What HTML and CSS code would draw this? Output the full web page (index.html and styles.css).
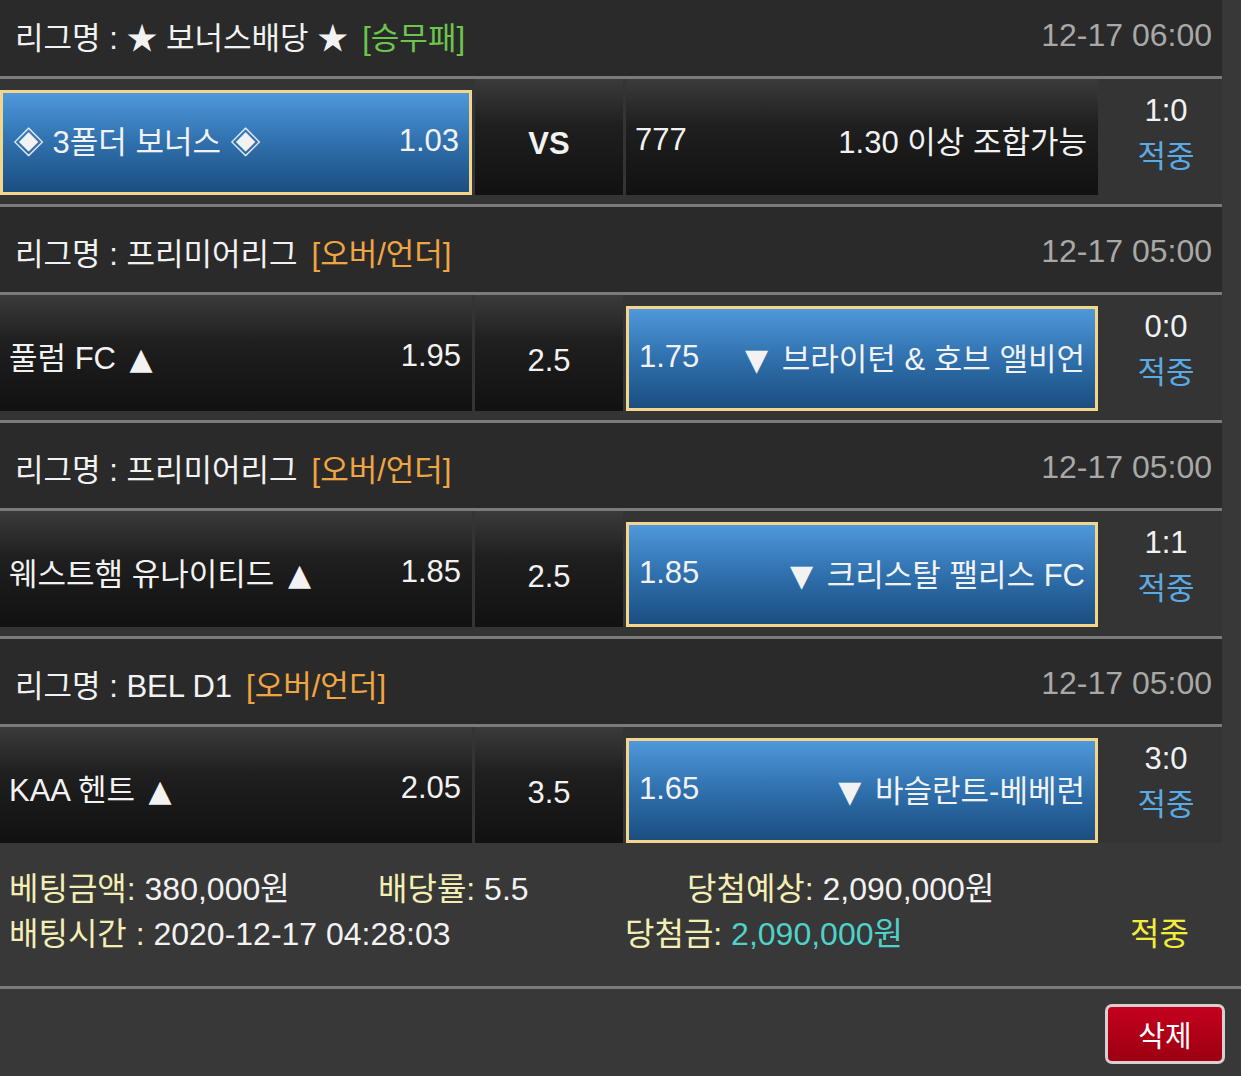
FILE: index.html
```html
<!DOCTYPE html>
<html lang="ko">
<head>
    <meta charset="UTF-8">
    <meta name="viewport" content="width=device-width, initial-scale=1.0">
    <title>베팅내역</title>
    <link rel="stylesheet" href="styles.css">
</head>
<body>
    <div class="slip">
        <!-- 경기 1 -->
        <div class="match">
            <div class="league">
                <span class="league-name">리그명 : ★ 보너스배당 ★</span>
                <span class="bet-type type-green">[승무패]</span>
                <span class="match-time">12-17 06:00</span>
            </div>
            <div class="bet-row">
                <div class="cell team selected">
                    <span>◈ 3폴더 보너스 ◈</span>
                    <span>1.03</span>
                </div>
                <div class="cell mid vs">VS</div>
                <div class="cell team">
                    <span>777</span>
                    <span>1.30 이상 조합가능</span>
                </div>
                <div class="result">
                    <div class="score">1:0</div>
                    <div class="status">적중</div>
                </div>
            </div>
        </div>

        <!-- 경기 2 -->
        <div class="match">
            <div class="league">
                <span class="league-name">리그명 : 프리미어리그</span>
                <span class="bet-type type-orange">[오버/언더]</span>
                <span class="match-time">12-17 05:00</span>
            </div>
            <div class="bet-row">
                <div class="cell team">
                    <span>풀럼 FC <span class="arrow up">▲</span></span>
                    <span>1.95</span>
                </div>
                <div class="cell mid">2.5</div>
                <div class="cell team selected">
                    <span>1.75</span>
                    <span><span class="arrow down">▼</span> 브라이턴 &amp; 호브 앨비언</span>
                </div>
                <div class="result">
                    <div class="score">0:0</div>
                    <div class="status">적중</div>
                </div>
            </div>
        </div>

        <!-- 경기 3 -->
        <div class="match">
            <div class="league">
                <span class="league-name">리그명 : 프리미어리그</span>
                <span class="bet-type type-orange">[오버/언더]</span>
                <span class="match-time">12-17 05:00</span>
            </div>
            <div class="bet-row">
                <div class="cell team">
                    <span>웨스트햄 유나이티드 <span class="arrow up">▲</span></span>
                    <span>1.85</span>
                </div>
                <div class="cell mid">2.5</div>
                <div class="cell team selected">
                    <span>1.85</span>
                    <span><span class="arrow down">▼</span> 크리스탈 팰리스 FC</span>
                </div>
                <div class="result">
                    <div class="score">1:1</div>
                    <div class="status">적중</div>
                </div>
            </div>
        </div>

        <!-- 경기 4 -->
        <div class="match">
            <div class="league">
                <span class="league-name">리그명 : BEL D1</span>
                <span class="bet-type type-orange">[오버/언더]</span>
                <span class="match-time">12-17 05:00</span>
            </div>
            <div class="bet-row">
                <div class="cell team">
                    <span>KAA 헨트 <span class="arrow up">▲</span></span>
                    <span>2.05</span>
                </div>
                <div class="cell mid">3.5</div>
                <div class="cell team selected">
                    <span>1.65</span>
                    <span><span class="arrow down">▼</span> 바슬란트-베베런</span>
                </div>
                <div class="result">
                    <div class="score">3:0</div>
                    <div class="status">적중</div>
                </div>
            </div>
        </div>
    </div>

    <div class="summary">
        <div class="summary-line">
            <span class="col-a"><span class="label">베팅금액:</span> 380,000원</span>
            <span class="col-b"><span class="label">배당률:</span> 5.5</span>
            <span><span class="label">당첨예상:</span> 2,090,000원</span>
        </div>
        <div class="summary-line">
            <span class="col-c"><span class="label">배팅시간 :</span> 2020-12-17 04:28:03</span>
            <span class="col-d"><span class="label">당첨금:</span> <span class="won">2,090,000원</span></span>
            <span class="win">적중</span>
        </div>
    </div>

    <div class="actions">
        <button class="delete-btn">삭제</button>
    </div>
</body>
</html>
```

FILE: styles.css
```css
:root {
    --bg-page: #383838;
    --bg-header: #2a2a2a;
    --bg-row: #343434;
    --line: #7b7b7b;
    --text-main: #f2f2f2;
    --text-dim: #a8a8a8;
    --label: #f3efb4;
    --blue-text: #5aaae8;
}

* {
    margin: 0;
    padding: 0;
    box-sizing: border-box;
}

body {
    font-family: "Liberation Sans", "Noto Sans CJK KR", sans-serif;
    font-size: 31px;
    background: var(--bg-page);
    color: var(--text-main);
    overflow: hidden;
}

/* 경기 목록 */
.slip {
    width: 1222px;
    margin-top: -9px;
}

.league {
    display: flex;
    align-items: center;
    height: 88px;
    padding: 4px 10px 0 15px;
    background: var(--bg-header);
    border-bottom: 3px solid var(--line);
}

.bet-type {
    margin-left: 14px;
}

.type-green {
    color: #6cc64c;
}

.type-orange {
    color: #f0a542;
}

.match-time {
    margin-left: auto;
    font-size: 32px;
    color: var(--text-dim);
}

.bet-row {
    display: flex;
    height: 128px;
    padding-bottom: 9px;
    background: var(--bg-row);
    border-bottom: 3px solid var(--line);
}

.match:last-child .bet-row {
    height: 116px;
    padding-bottom: 0;
    border-bottom: none;
}

.cell {
    display: flex;
    align-items: center;
    padding: 5px 11px 0 9px;
    background: linear-gradient(#3b3b3b 0%, #1f1f1f 40%, #111 100%);
}

.team {
    width: 472px;
    justify-content: space-between;
    white-space: nowrap;
}

.mid {
    width: 148px;
    margin: 0 3px;
    justify-content: center;
    padding: 16px 0 0;
}

.vs {
    font-weight: 700;
    padding-top: 14px;
}

.selected {
    margin-top: 11px;
    padding: 0 10px 4px 10px;
    border: 3px solid #f2d68c;
    background: linear-gradient(#4f98db 0%, #2f70ad 50%, #1b4e80 100%);
}

.arrow {
    font-family: "DejaVu Sans", sans-serif;
    font-size: 30px;
}

.arrow.up {
    margin-left: 5px;
}

.arrow.down {
    margin-right: 5px;
}

.result {
    width: 124px;
    padding: 9px 0 0 12px;
    text-align: center;
    line-height: 46px;
}

.status {
    color: var(--blue-text);
}

/* 합계 */
.summary {
    height: 146px;
    padding: 24px 0 0 9px;
    border-bottom: 3px solid var(--line);
    font-size: 32px;
    line-height: 45px;
}

.summary-line {
    display: flex;
    white-space: nowrap;
}

.label {
    color: var(--label);
}

.col-a {
    width: 369px;
}

.col-b {
    width: 309px;
}

.col-c {
    width: 616px;
}

.col-d {
    width: 505px;
}

.won {
    color: #4fd2c9;
}

.win {
    color: #f2ec3c;
}

/* 버튼 */
.actions {
    display: flex;
    justify-content: flex-end;
    padding: 15px 16px 0 0;
}

.delete-btn {
    width: 120px;
    height: 60px;
    font-family: "Liberation Sans", "Noto Sans CJK KR", sans-serif;
    font-size: 29px;
    color: #fff;
    background: linear-gradient(#c4001e, #9c0012);
    border: 3px solid #d9cfcf;
    border-radius: 7px;
    cursor: pointer;
}
```
